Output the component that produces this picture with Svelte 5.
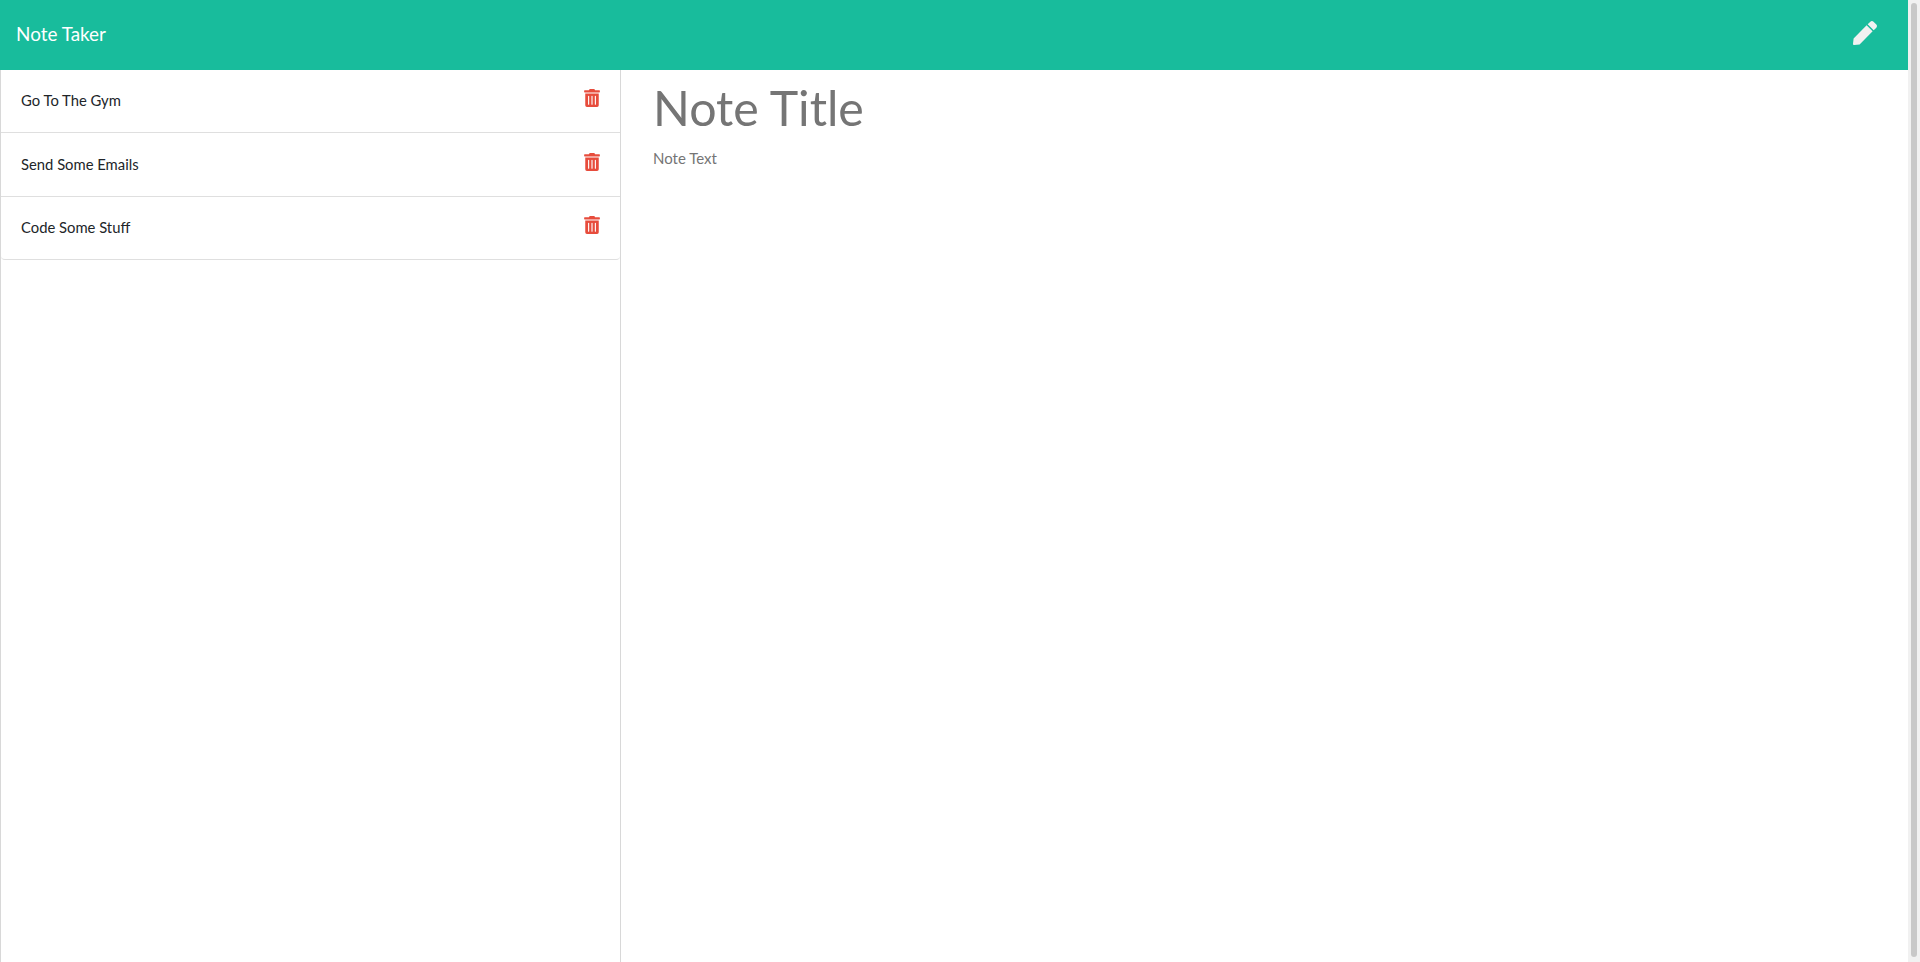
<script>
	const notes = ['Go To The Gym', 'Send Some Emails', 'Code Some Stuff'];
</script>

<div class="page">
	<div class="main">
		<nav class="navbar">
			<a class="brand" href="/">Note Taker</a>
			<svg class="pen" viewBox="0 0 512 512" aria-hidden="true">
				<path d="M290.74 93.24l128.02 128.02-277.99 277.99-114.14 12.6C11.35 513.54-1.56 500.62.14 485.34l12.7-114.22 277.9-277.88zm207.2-19.06l-60.11-60.11c-18.75-18.75-49.16-18.75-67.91 0l-56.55 56.55 128.02 128.02 56.55-56.55c18.75-18.76 18.75-49.16 0-67.91z"></path>
			</svg>
		</nav>
		<div class="content">
			<aside class="sidebar">
				<ul class="list">
					{#each notes as note}
						<li class="item">
							<span>{note}</span>
							<svg class="trash" viewBox="0 0 448 512" aria-hidden="true">
								<path d="M32 464a48 48 0 0 0 48 48h288a48 48 0 0 0 48-48V128H32zm272-256a16 16 0 0 1 32 0v224a16 16 0 0 1-32 0zm-96 0a16 16 0 0 1 32 0v224a16 16 0 0 1-32 0zm-96 0a16 16 0 0 1 32 0v224a16 16 0 0 1-32 0zM432 32H312l-9.4-18.7A24 24 0 0 0 281.1 0H166.8a23.72 23.72 0 0 0-21.4 13.3L136 32H16A16 16 0 0 0 0 48v32a16 16 0 0 0 16 16h416a16 16 0 0 0 16-16V48a16 16 0 0 0-16-16z"></path>
							</svg>
						</li>
					{/each}
				</ul>
			</aside>
			<section class="editor">
				<h1 class="title">Note Title</h1>
				<p class="text">Note Text</p>
			</section>
		</div>
	</div>
	<div class="scrollbar"><div class="thumb"></div></div>
</div>

<style>
	:global(body) {
		margin: 0;
		font-family: 'Lato', sans-serif;
		background: #fff;
		overflow: hidden;
	}

	.page {
		display: flex;
		height: 962px;
		overflow: hidden;
	}

	.main {
		flex: 1;
		display: flex;
		flex-direction: column;
		min-width: 0;
	}

	.navbar {
		height: 70px;
		flex: none;
		background: #18bc9c;
		display: flex;
		align-items: center;
		justify-content: space-between;
		padding: 0 31px 0 16px;
	}

	.brand {
		color: #fff;
		font-size: 18.9px;
		line-height: 28px;
		margin-bottom: 2px;
		text-decoration: none;
	}

	.pen {
		width: 24px;
		height: 24px;
		fill: #f1f1f1;
		margin-bottom: 4px;
	}

	.content {
		flex: 1;
		display: flex;
		min-height: 0;
	}

	.sidebar {
		width: 621px;
		flex: none;
		box-sizing: border-box;
		border-left: 1px solid #d8d8d8;
		border-right: 1px solid #d8d8d8;
	}

	.list {
		list-style: none;
		margin: 0;
		padding: 0;
	}

	.item {
		display: flex;
		justify-content: space-between;
		align-items: flex-start;
		height: 63.33px;
		padding: 19.3px 20px 0 20px;
		box-sizing: border-box;
		border-bottom: 1px solid #dfdfdf;
		font-size: 14.8px;
		line-height: 22px;
		color: #212529;
	}

	.item:last-child {
		border-bottom-left-radius: 4px;
		border-bottom-right-radius: 4px;
	}

	.trash {
		width: 16px;
		height: 18px;
		fill: #e74c3c;
	}

	.editor {
		flex: 1;
		padding: 0 32px;
		color: #757575;
	}

	.title {
		margin: 6px 0 0;
		font-size: 48.3px;
		font-weight: 400;
		line-height: 62px;
	}

	.text {
		margin: 8px 0 0;
		font-size: 15px;
		line-height: 24px;
	}

	.scrollbar {
		width: 12px;
		flex: none;
		background: #f1f1f1;
		padding: 3px 3px 5px;
		box-sizing: border-box;
	}

	.thumb {
		height: 100%;
		background: #c8c8c8;
		border-radius: 3px;
	}
</style>
